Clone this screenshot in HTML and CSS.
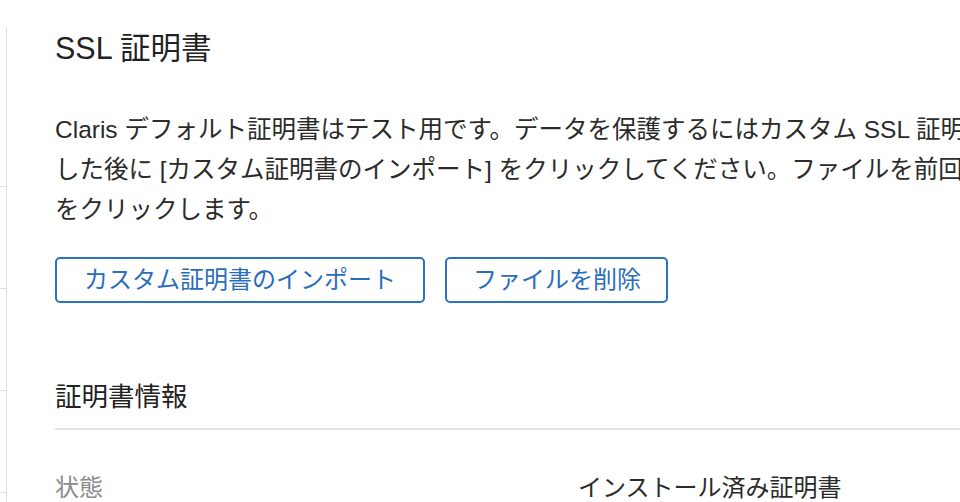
FILE: index.html
```html
<!DOCTYPE html>
<html lang="ja">
<head>
<meta charset="utf-8">
<title>SSL 証明書</title>
<link rel="stylesheet" href="styles.css">
</head>
<body>
<div class="page">
  <nav class="sidebar">
    <div class="nav-item nav-first"></div>
    <div class="nav-item"></div>
    <div class="nav-item"></div>
    <div class="nav-item"></div>
  </nav>
  <main class="main">
    <h1 class="title">SSL 証明書</h1>
    <p class="desc">
      <span class="line">Claris デフォルト証明書はテスト用です。データを保護するにはカスタム SSL 証明書を購入してインポートしてください。証明書ファイルを選択</span>
      <span class="line">した後に [カスタム証明書のインポート] をクリックしてください。ファイルを前回の状態に戻すには [ファイルを削除]</span>
      <span class="line">をクリックします。</span>
    </p>
    <div class="actions">
      <button class="btn btn-import">カスタム証明書のインポート</button>
      <button class="btn btn-delete">ファイルを削除</button>
    </div>
    <h2 class="section-title">証明書情報</h2>
    <div class="info-row">
      <div class="info-label">状態</div>
      <div class="info-value">インストール済み証明書</div>
    </div>
  </main>
</div>
</body>
</html>
```

FILE: styles.css
```css
html, body {
  margin: 0;
  padding: 0;
  overflow: hidden;
  background: #ffffff;
}

body {
  font-family: "Liberation Sans", "Noto Sans CJK JP", sans-serif;
  color: #2b2b2b;
  width: 960px;
  height: 502px;
}

.page {
  display: flex;
  height: 502px;
  overflow: hidden;
}

.sidebar {
  flex: 0 0 6px;
  margin-top: 28px;
  border-right: 1px solid #dcdcdc;
  display: flex;
  flex-direction: column;
}

.nav-item {
  height: 101px;
  border-bottom: 1px solid #dcdcdc;
  flex: 0 0 auto;
}

.nav-first {
  height: 158px;
}

.main {
  flex: 1;
  min-width: 0;
  padding: 28px 0 0 48px;
  overflow: hidden;
}

.title {
  margin: 0;
  font-size: 30.5px;
  line-height: 40px;
  font-weight: 400;
  color: #222222;
  white-space: nowrap;
}

.desc {
  margin: 42px 0 0;
  font-size: 24.5px;
  line-height: 40px;
  color: #2b2b2b;
}

.line {
  display: block;
  white-space: nowrap;
}

.actions {
  display: flex;
  gap: 20px;
  margin-top: 27px;
}

.btn {
  font-family: "Liberation Sans", "Noto Sans CJK JP", sans-serif;
  font-size: 24px;
  height: 46px;
  padding: 0 26px;
  background: #ffffff;
  color: #2a6db8;
  border: 2px solid #2b72c2;
  border-radius: 5px;
  white-space: nowrap;
  line-height: 1;
}

.btn-import {
  width: 370px;
}

.btn-delete {
  width: 223px;
}

.section-title {
  margin: 76px 0 0;
  font-size: 26.5px;
  line-height: 36px;
  font-weight: 400;
  color: #222222;
  padding-bottom: 13px;
  border-bottom: 2px solid #e3e3e3;
}

.info-row {
  display: grid;
  grid-template-columns: 523px 1fr;
  margin-top: 38px;
  font-size: 24px;
  line-height: 40px;
  white-space: nowrap;
}

.info-label {
  color: #8c8c8c;
}

.info-value {
  color: #2b2b2b;
}
```
